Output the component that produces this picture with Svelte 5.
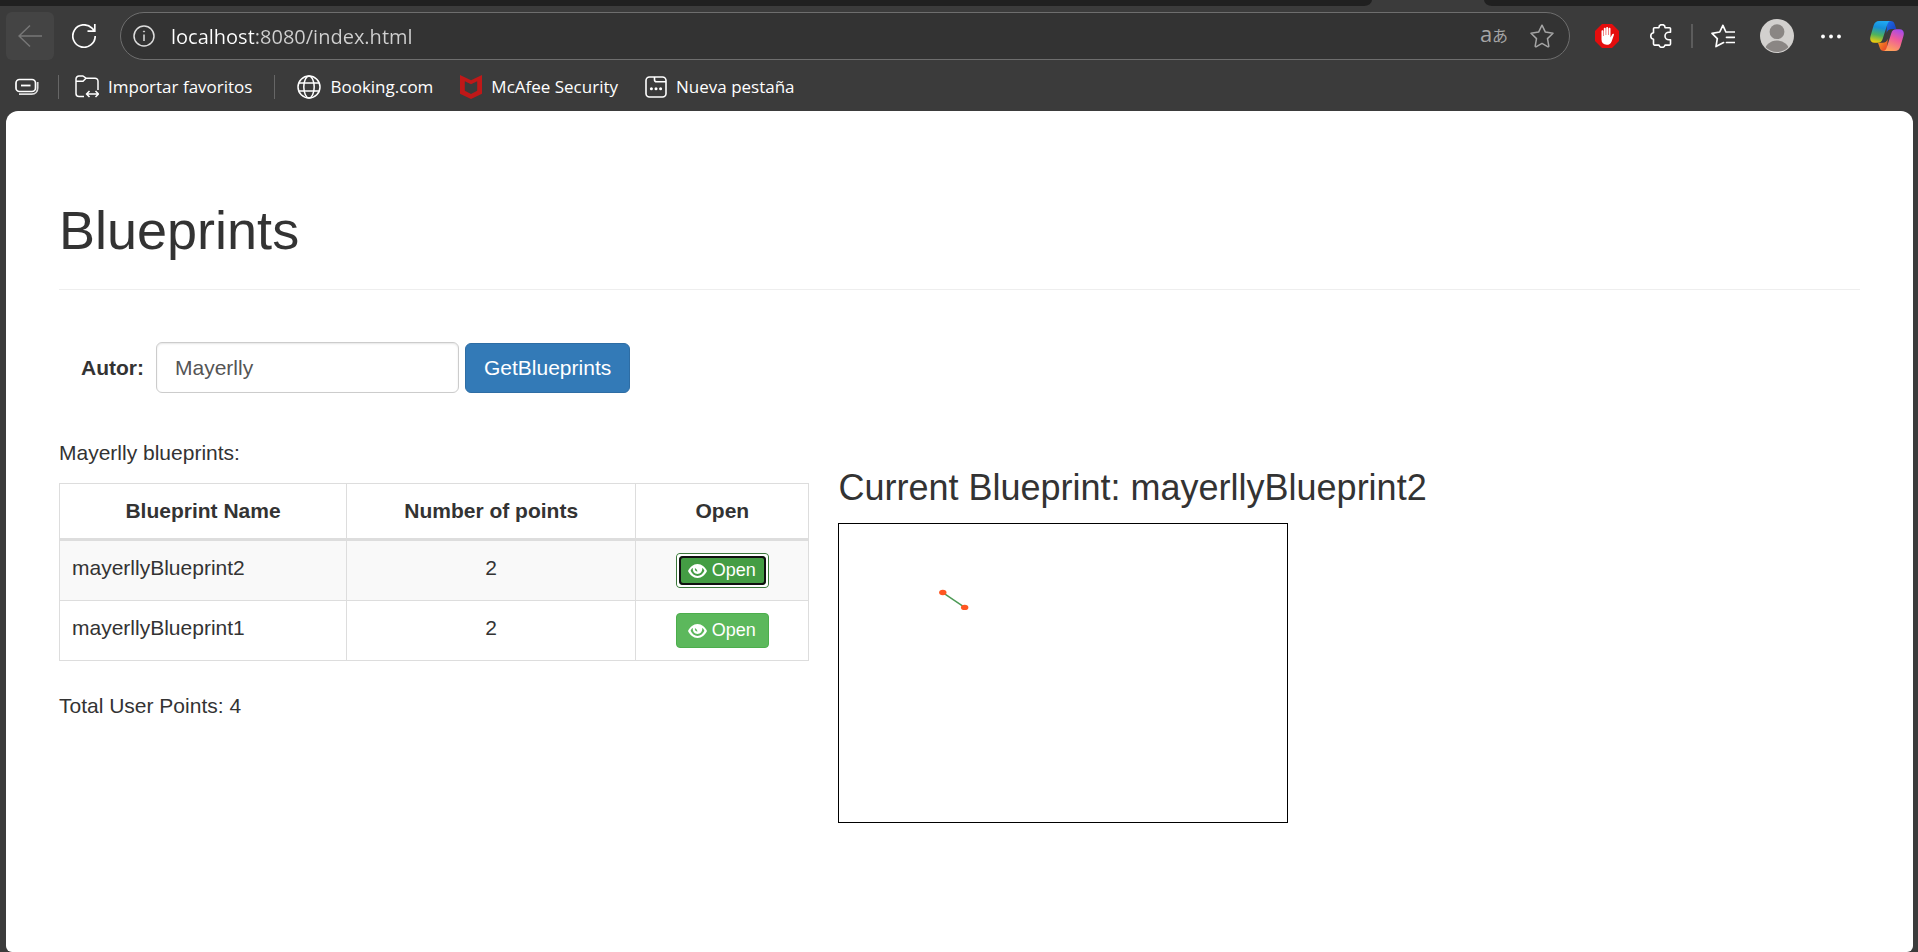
<script>
  let author = $state('Mayerlly');
  let address = $state('localhost:8080/index.html');

  const blueprints = [
    { name: 'mayerllyBlueprint2', points: [[104, 69], [126, 84]] },
    { name: 'mayerllyBlueprint1', points: [[60, 40], [90, 120]] }
  ];
  let current = $state(blueprints[0]);
  const total = blueprints.reduce((sum, b) => sum + b.points.length, 0);
</script>

<div class="window">
  <div class="tabs"><div class="before"></div><div class="after"></div></div>

  <header>
    <nav class="toolbar" aria-label="Browser">
      <button class="tool back" aria-label="Back">
        <svg width="24" height="24" viewBox="0 0 24 24" fill="none" stroke="#777" stroke-width="1.5"><path d="M24 12H1M12 1.500L1 12l11 10.500" /></svg>
      </button>
      <button class="tool" aria-label="Reload">
        <svg width="24" height="24" viewBox="0 0 24 24" fill="none" stroke="#fff" stroke-width="1.700"><path d="M23.200 12A11.200 11.200 0 1 1 20 4.200l2.500 2.600M22.800 0v7.200H15.500" /></svg>
      </button>

      <div class="address">
        <button class="inner" aria-label="Site information">
          <svg width="22" height="22" viewBox="0 0 22 22" fill="none" stroke="#ddd" stroke-width="1.500"><circle cx="11" cy="11" r="10" /><path d="M11 9.500v6.500" /><circle cx="11" cy="6.500" r=".6" fill="#ddd" stroke-width=".8" /></svg>
        </button>
        <input class="url" aria-label="Address" bind:value={address} spellcheck="false" />
        <button class="inner translate" aria-label="Translate"><span class="latin">a</span><span class="kana">あ</span></button>
        <button class="inner" aria-label="Add to favorites">
          <svg width="24" height="24" viewBox="0 0 24 24" fill="none" stroke="#a5a5a5" stroke-width="1.500" stroke-linejoin="round"><path d="M12 1.200l3.400 6.900 7.600 1.100-5.500 5.400 1.300 7.600a.6.6 0 0 1-.8.6L12 19.400l-6 3.400a.6.6 0 0 1-.8-.6l1.300-7.600L1 9.200l7.600-1.100z" /></svg>
        </button>
      </div>

      <button class="tool" aria-label="Ad blocker">
        <svg width="24" height="24" viewBox="0 0 24 24"><path d="M7 0h10l7 7v10l-7 7H7l-7-7V7z" fill="#e40d0d" /><path d="M6.500 7.200c0-1.300 1.800-1.300 1.800 0V12h.5V4.700c0-1.300 1.900-1.300 1.900 0V11h.5V3.900c0-1.300 1.900-1.300 1.900 0V11h.5V4.700c0-1.300 1.900-1.300 1.900 0V13.500l1.600-3.100c.7-1.200 2.300-.6 1.800.7l-2.300 6.300c-.8 2.300-2.500 3.400-4.900 3.400-3.400 0-5.200-1.900-5.200-5.200z" fill="#fff" /></svg>
      </button>
      <button class="tool" aria-label="Extensions">
        <svg width="24" height="24" viewBox="0 0 24 24" fill="none" stroke="#fff" stroke-width="1.600" stroke-linejoin="round"><path d="M5.500 3.700h4.400a3.100 3.100 0 0 1 6.200 0H20.500a1 1 0 0 1 1 1V8.200H19.800a3.800 3.800 0 0 0 0 7.600h1.700v4.300a1 1 0 0 1-1 1H16a3.100 3.100 0 0 1-6 0H5.500a1 1 0 0 1-1-1V15.200a3.300 3.300 0 0 1 0-6.500v-4a1 1 0 0 1 1-1z" /></svg>
      </button>
      <span class="rule wide"></span>
      <button class="tool" aria-label="Favorites">
        <svg width="24" height="24" viewBox="0 0 24 24" fill="none" stroke="#fff" stroke-width="1.700" stroke-linejoin="round" stroke-linecap="round"><path d="M15.500 8h-.6L11.900 1.300 8.700 8 1 9.400l5.300 5.300-1.300 7.900 7.600-4" /><path d="M16.500 8H23.500M15.500 13.300h8M15.500 18.500h8" /></svg>
      </button>
      <button class="tool" aria-label="Profile">
        <svg width="34" height="34" viewBox="0 0 34 34"><defs><clipPath id="face"><circle cx="17" cy="17" r="16" /></clipPath></defs><circle cx="17" cy="17" r="17" fill="#d2d0ce" /><g fill="#8a8684" clip-path="url(#face)"><circle cx="17" cy="12.700" r="7.400" /><ellipse cx="17" cy="33" rx="12.500" ry="11.500" /></g></svg>
      </button>
      <button class="tool" aria-label="Settings and more">
        <svg width="20" height="6" viewBox="0 0 20 6" fill="#fff"><circle cx="2" cy="3.500" r="1.900" /><circle cx="10" cy="3.500" r="1.900" /><circle cx="18" cy="3.500" r="1.900" /></svg>
      </button>
      <button class="tool copilot" aria-label="Copilot">
        <svg width="34" height="30" viewBox="0 0 34 30">
          <defs>
            <linearGradient id="cool" x1=".5" y1="0" x2=".3" y2="1"><stop offset="0" stop-color="#1fa8f2" /><stop offset=".3" stop-color="#168fd8" /><stop offset=".65" stop-color="#4fb35c" /><stop offset="1" stop-color="#f3ce0a" /></linearGradient>
            <linearGradient id="deep" x1="0" y1="0" x2="1" y2="1"><stop offset="0" stop-color="#1d6ee6" /><stop offset="1" stop-color="#173bb8" /></linearGradient>
            <linearGradient id="warm" x1=".8" y1="0" x2=".4" y2="1"><stop offset="0" stop-color="#a24af0" /><stop offset=".45" stop-color="#ee5a9c" /><stop offset="1" stop-color="#ffa25a" /></linearGradient>
            <linearGradient id="ember" x1="0" y1="0" x2="1" y2="1"><stop offset="0" stop-color="#f9a51a" /><stop offset="1" stop-color="#e5372e" /></linearGradient>
          </defs>
          <path d="M17 0h3.500c2.300 0 3.500 1 4.200 3.200L26.300 8H22c-3 0-4.500 1.300-5.400 4z" fill="url(#deep)" />
          <path d="M17 30h-3c-2.300 0-3.600-1-4.300-3.200L8 21.700h4.500c3 0 4.400-1.300 5.200-4z" fill="url(#ember)" />
          <path d="M9 0h12c-2 0-3 1.500-3.700 3.600l-4.500 14C11.900 20.600 10.500 21.700 7.500 21.700H4.500C.8 21.700-.5 19 .5 15.200L3.600 4.500C4.600 1.500 6.300 0 9 0z" fill="url(#cool)" />
          <path d="M25 30H13c2 0 3-1.500 3.700-3.600l4.500-14C22.100 9.400 23.500 8.200 26.500 8.200h3c3.700 0 5 2.700 4 6.500l-3.100 10.800C29.400 28.500 27.700 30 25 30z" fill="url(#warm)" />
        </svg>
      </button>
    </nav>

    <nav class="favorites" aria-label="Favorites bar">
      <button class="workspace" aria-label="Workspaces">
        <svg width="24" height="18" viewBox="0 0 24 18" fill="none" stroke="#fff" stroke-width="1.700"><rect x="1" y="1.500" width="19.500" height="12" rx="3.500" /><path d="M6 7.500h9.500" stroke-width="1.800" /><path d="M22.700 4v6c0 3.600-2.400 6.200-6 6.200H4" stroke="#ddd" /></svg>
      </button>
      <span class="rule"></span>
      <a class="import" href="#import">
        <svg width="24" height="24" viewBox="0 0 24 24" fill="none" stroke="#fff" stroke-width="1.500" stroke-linejoin="round"><path d="M9 21.500H4a3 3 0 0 1-3-3V4a3 3 0 0 1 3-3h4l3 2.200h9a3 3 0 0 1 3 3V15M1 6.200h7L11 3.200" /><path d="M14.500 16l-3 3 3 3M20.500 16l3 3-3 3M11.500 19h12" /></svg>
        Importar favoritos
      </a>
      <span class="rule"></span>
      <a class="booking" href="#booking">
        <svg width="24" height="24" viewBox="0 0 24 24" fill="none" stroke="#fff" stroke-width="1.500"><circle cx="12" cy="12" r="11" /><ellipse cx="12" cy="12" rx="5.200" ry="11" /><path d="M2 8h20M2 16h20" /></svg>
        Booking.com
      </a>
      <a class="mcafee" href="#mcafee">
        <svg width="22" height="24" viewBox="0 0 22 24"><path fill-rule="evenodd" d="M0 0l11 5.200L22 0v18.700L11 24 0 18.700zM4.800 6.200v9.600L11 18.900l6.200-3.100V6.200L11 9.300z" fill="#c01818" /></svg>
        McAfee Security
      </a>
      <a class="newtab" href="#new">
        <svg width="22" height="22" viewBox="0 0 22 22" fill="none" stroke="#fff" stroke-width="1.600"><rect x="1" y="1" width="20" height="20" rx="3.500" /><path d="M9.500 1v2.700a2 2 0 0 0 2 2H21" /><g fill="#fff" stroke="none"><circle cx="6.400" cy="12.700" r="1.500" /><circle cx="11" cy="12.700" r="1.500" /><circle cx="15.600" cy="12.700" r="1.500" /></g></svg>
        Nueva pestaña
      </a>
    </nav>
  </header>

  <main>
    <h1>Blueprints</h1>
    <form onsubmit={(e) => e.preventDefault()}>
      <label for="author">Autor:</label>
      <input id="author" type="text" bind:value={author} />
      <button type="submit">GetBlueprints</button>
    </form>

    <div class="columns">
      <section>
        <p>{author} blueprints:</p>
        <table>
          <colgroup><col class="name" /><col class="count" /><col class="action" /></colgroup>
          <thead>
            <tr><th>Blueprint Name</th><th>Number of points</th><th>Open</th></tr>
          </thead>
          <tbody>
            {#each blueprints as blueprint}
              <tr>
                <td>{blueprint.name}</td>
                <td class="center">{blueprint.points.length}</td>
                <td class="center">
                  <button class="open" class:selected={blueprint.name === current.name} onclick={() => (current = blueprint)}>
                    <svg width="19" height="14" viewBox="0 0 19 14"><path d="M9.500 0C5.300 0 2 3 0 7c2 4 5.300 7 9.500 7S17 11 19 7c-2-4-5.300-7-9.500-7z" fill="#fff" /><path d="M2.600 6.700c1.300 3.100 3.900 5.200 6.900 5.200s5.600-2.100 6.900-5.200c-.5-1.300-1.200-2.300-2.200-3 .5 3.600-1.800 6.200-4.700 6.200S4.300 7.300 4.800 3.700c-1 .7-1.700 1.700-2.200 3z" class="iris" /><path d="M7 3.900c-.5 1.900.4 3.500 2.500 3.700L8.900 5.800z" class="iris" /></svg>
                    Open
                  </button>
                </td>
              </tr>
            {/each}
          </tbody>
        </table>
        <p>Total User Points: {total}</p>
      </section>

      <section class="drawing">
        <h2>Current Blueprint: {current.name}</h2>
        <svg class="canvas" width="450" height="300" viewBox="0 0 450 300">
          <polyline points={current.points.map((p) => p.join(',')).join(' ')} fill="none" stroke="#4c9a55" stroke-width="1.500" />
          {#each current.points as [x, y]}
            <ellipse cx={x} cy={y} rx="3.700" ry="2.700" fill="#ff5722" />
          {/each}
        </svg>
      </section>
    </div>
  </main>
</div>

<style>
  :global(body) {
    margin: 0;
    background: #3b3b3b;
  }
  .window {
    min-height: 100vh;
    display: flex;
    flex-direction: column;
    box-sizing: border-box;
    padding: 0 5px 0 6px;
    background: #3b3b3b;
  }
  .window *,
  .window *::after {
    box-sizing: border-box;
  }
  .window svg {
    display: block;
    flex: none;
  }
  button,
  input {
    margin: 0;
    font: inherit;
  }
  .tabs {
    height: 6px;
    margin: 0 -5px 0 -6px;
    display: flex;
    gap: 112px;
  }
  .before {
    flex: 1;
    border-bottom-right-radius: 8px 6px;
    background: #202020;
  }
  .after {
    width: 434px;
    border-bottom-left-radius: 8px 6px;
    background: #202020;
  }

  header {
    font-family: "Open Sans", "Noto Sans", "Noto Sans CJK JP", sans-serif;
    color: #fff;
  }
  .toolbar {
    display: flex;
    align-items: center;
    gap: 6px;
    padding-top: 6px;
  }
  .tool {
    width: 48px;
    height: 48px;
    flex: none;
    display: flex;
    align-items: center;
    justify-content: center;
    padding: 0;
    border: 0;
    border-radius: 6px;
    background: none;
  }
  .back {
    background: #444;
  }
  .copilot {
    width: 52px;
  }
  .rule {
    width: 1px;
    height: 24px;
    flex: none;
    background: #666;
  }
  .wide {
    width: 2px;
    background: #5c5c5c;
  }
  .address {
    flex: 1;
    min-width: 0;
    height: 48px;
    display: flex;
    align-items: center;
    margin: 0 7px 0 6px;
    padding: 0 6px 0 2px;
    border: 1px solid #6e6e6e;
    border-radius: 24px;
    background: #333;
  }
  .inner {
    width: 42px;
    height: 42px;
    flex: none;
    display: flex;
    align-items: center;
    justify-content: center;
    padding: 0;
    border: 0;
    background: none;
  }
  .translate {
    width: 54px;
    align-items: baseline;
    padding-top: 6px;
    color: #a5a5a5;
    line-height: 24px;
  }
  .latin {
    font-size: 22px;
  }
  .kana {
    font-family: "Noto Sans CJK JP", sans-serif;
    font-size: 16px;
  }
  .url {
    flex: 1;
    min-width: 0;
    height: 40px;
    padding: 0 0 0 6px;
    border: 0;
    outline: 0;
    font-size: 20px;
    background: linear-gradient(90deg, #fff 89px, #d0d0d0 89px);
    -webkit-background-clip: text;
    background-clip: text;
    color: transparent;
  }
  .favorites {
    display: flex;
    align-items: center;
    height: 48px;
    margin-top: 3px;
    font-size: 17px;
    line-height: 24px;
  }
  .favorites a {
    display: flex;
    align-items: center;
    gap: 9px;
    color: inherit;
    text-decoration: none;
    white-space: nowrap;
  }
  .workspace {
    padding: 0 19px 0 9px;
    border: 0;
    background: none;
  }
  .import {
    padding: 0 22px 0 16px;
  }
  .booking {
    padding: 0 27px 0 22px;
  }
  .mcafee {
    padding-right: 27px;
  }

  main {
    flex: 1;
    padding: 89px 53px 60px 53px;
    border-radius: 12px 12px 6px 6px;
    background: #fff;
    color: #333;
    font: 21px/30px "Liberation Sans", Arial, sans-serif;
  }
  h1 {
    margin: 0 0 52px;
    padding-bottom: 29px;
    border-bottom: 1px solid #eee;
    font-size: 54px;
    line-height: 60px;
    font-weight: 400;
  }
  form {
    display: flex;
    align-items: center;
    gap: 6px;
    margin-bottom: 45px;
    padding-left: 22px;
  }
  label {
    margin-right: 6px;
    font-weight: 700;
  }
  form input {
    width: 303px;
    height: 51px;
    padding: 0 18px;
    border: 1px solid #ccc;
    border-radius: 6px;
    outline: 0;
    background: #fff;
    color: #555;
    box-shadow: inset 0 1px 2px rgba(0, 0, 0, 0.1);
  }
  form button {
    height: 50px;
    padding: 0 18px;
    border: 1px solid #2e6da4;
    border-radius: 6px;
    background: #337ab7;
    color: #fff;
  }
  .columns {
    display: grid;
    grid-template-columns: 5fr 7fr;
  }
  p {
    margin: 0 0 15px;
  }
  table {
    width: 100%;
    margin-bottom: 30px;
    border: 1px solid #ddd;
    border-width: 1px 0 0 1px;
    border-spacing: 0;
    table-layout: fixed;
  }
  .name {
    width: 38.3%;
  }
  .count {
    width: 38.6%;
  }
  th,
  td {
    padding: 12px;
    border: 1px solid #ddd;
    border-width: 0 1px 1px 0;
    text-align: left;
    vertical-align: top;
  }
  th {
    border-bottom-width: 3px;
    text-align: center;
  }
  tbody tr:nth-child(odd) {
    background: #f9f9f9;
  }
  .center {
    text-align: center;
  }
  .open {
    position: relative;
    display: inline-flex;
    align-items: center;
    gap: 5px;
    height: 35px;
    padding: 0 12px 0 11px;
    overflow: hidden;
    vertical-align: top;
    border: 1px solid #4cae4c;
    border-radius: 4px;
    background: #5cb85c;
    color: #fff;
    font-size: 18px;
    line-height: 27px;
  }
  .iris {
    fill: #5cb85c;
  }
  .selected {
    border-color: #3a763a;
    background: #449d44;
  }
  .selected .iris {
    fill: #449d44;
  }
  .selected::after {
    content: "";
    position: absolute;
    inset: 2px;
    border: 2px solid #101010;
    border-radius: 4px;
    box-shadow: 0 0 0 4px #fff;
  }
  .drawing {
    padding: 30px 0 0 29px;
  }
  h2 {
    margin: 0 0 15px;
    font-size: 36px;
    line-height: 40px;
    font-weight: 400;
  }
  .canvas {
    border: 1px solid #000;
  }
</style>
